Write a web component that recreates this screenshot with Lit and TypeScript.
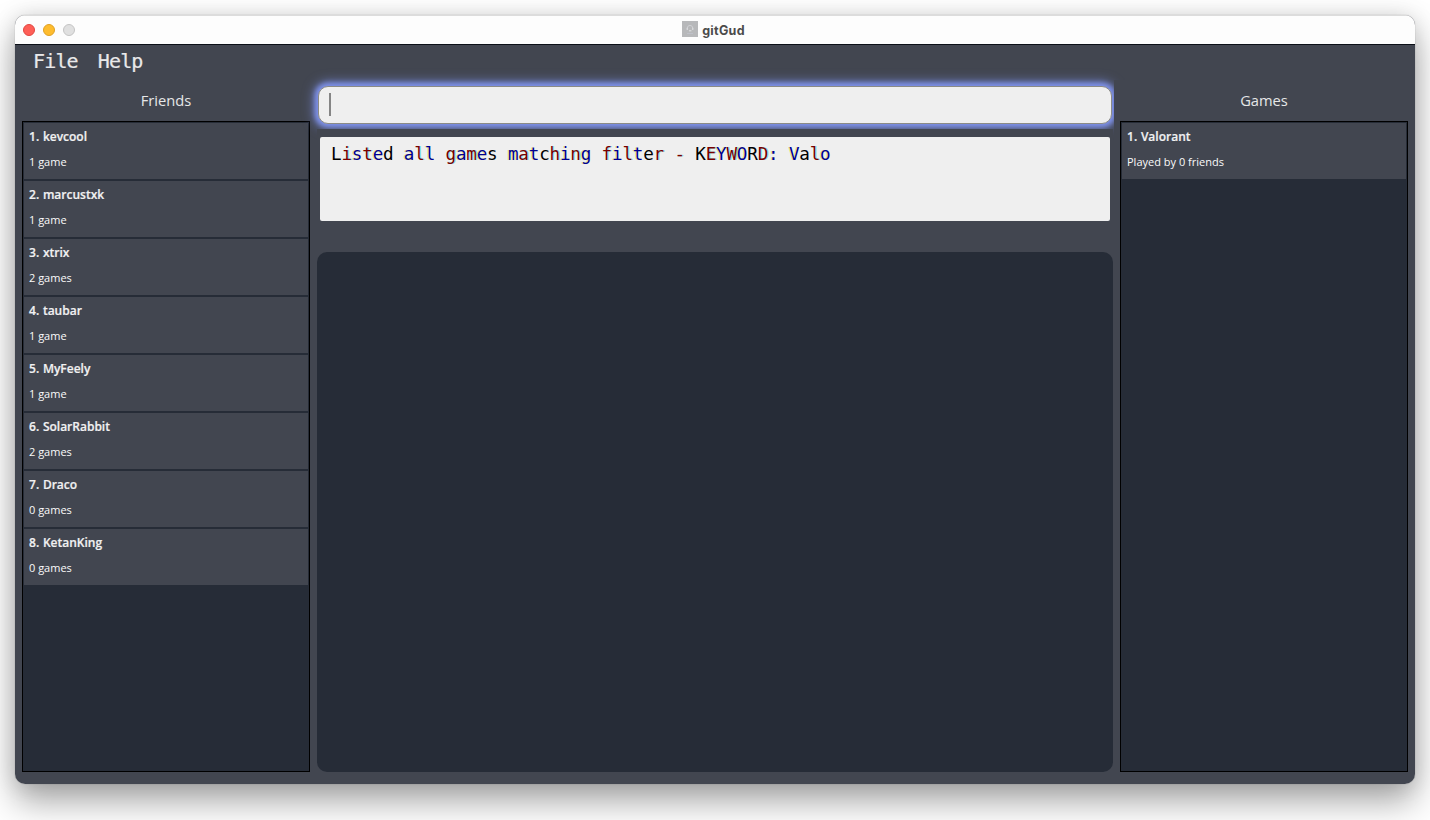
import { LitElement, html, css } from "lit";
import { customElement, property } from "lit/decorators.js";

interface Entry {
  name: string;
  detail: string;
}

const friends: Entry[] = [
  { name: "kevcool", detail: "1 game" },
  { name: "marcustxk", detail: "1 game" },
  { name: "xtrix", detail: "2 games" },
  { name: "taubar", detail: "1 game" },
  { name: "MyFeely", detail: "1 game" },
  { name: "SolarRabbit", detail: "2 games" },
  { name: "Draco", detail: "0 games" },
  { name: "KetanKing", detail: "0 games" },
];

const games: Entry[] = [{ name: "Valorant", detail: "Played by 0 friends" }];

const message = "Listed all games matching filter - KEYWORD: Valo";

// Subpixel colour fringe of each glyph; the advance of 10.4px repeats every five cells.
const fringes = ["plain", "warm", "cool", "warm", "cool"];

@customElement("entry-list")
class EntryList extends LitElement {
  @property() heading = "";
  @property({ attribute: false }) entries: Entry[] = [];

  static styles = css`
    :host {
      display: flex;
      flex-direction: column;
      width: 288px;
      flex: none;
      box-sizing: border-box;
      color: #f1f1f2;
      font-family: "Open Sans", sans-serif;
    }
    .heading {
      height: 41px;
      line-height: 40px;
      text-align: center;
      font-size: 14.7px;
      color: #e6e7e8;
    }
    .list {
      flex: 1;
      border: 1px solid #000;
      background: #262c37;
      padding: 1px;
      display: flex;
      flex-direction: column;
      gap: 2px;
    }
    .card {
      height: 56px;
      box-sizing: border-box;
      background: #424650;
      padding: 4px 5px 0;
    }
    .name {
      font-size: 12px;
      font-weight: 600;
      line-height: 20px;
      word-spacing: 0.6px;
      -webkit-text-stroke: 0.2px #f1f1f2;
      white-space: pre;
    }
    .detail {
      margin-top: 6px;
      font-size: 11px;
      line-height: 18px;
      color: #fafafa;
    }
  `;

  render() {
    return html`
      <div class="heading">${this.heading}</div>
      <div class="list">
        ${this.entries.map(
          (e, i) => html`<div class="card">
            <div class="name">${i + 1}. ${e.name}</div>
            <div class="detail">${e.detail}</div>
          </div>`
        )}
      </div>
    `;
  }
}

@customElement("app-root")
class AppRoot extends LitElement {
  static styles = css`
    :host {
      display: block;
      box-sizing: border-box;
      width: 1430px;
      height: 820px;
      padding: 15px 15px 36px;
      overflow: hidden;
      background: #fff;
    }
    .window {
      display: flex;
      flex-direction: column;
      height: 769px;
      border-radius: 10px;
      overflow: hidden;
      background: #424650;
    }
    .shade {
      border-radius: 10px;
      box-shadow: 0 0 1px rgba(0, 0, 0, 0.4), 0 0 22px rgba(0, 0, 0, 0.12),
        0 18px 34px rgba(0, 0, 0, 0.34);
    }
    .titlebar {
      position: relative;
      flex: none;
      height: 29px;
      box-sizing: border-box;
      background: #fdfdfd;
      border-top: 1px solid #dcdcdc;
      display: flex;
      align-items: center;
      justify-content: center;
      gap: 4px;
      padding-right: 3px;
      font: 700 12.5px Inter, sans-serif;
      letter-spacing: 0.3px;
      color: #4b4b4b;
    }
    .lights {
      position: absolute;
      left: 8px;
      top: 8px;
      display: flex;
      gap: 8px;
    }
    .light {
      width: 12px;
      height: 12px;
      box-sizing: border-box;
      border-radius: 50%;
    }
    .close { background: #fe5f57; border: 1px solid #e14640; }
    .minimize { background: #febc2e; border: 1px solid #dfa023; }
    .zoom { background: #e0e0e0; border: 1px solid #c4c4c4; }
    .icon {
      position: relative;
      top: -1px;
    }
    .menu {
      flex: none;
      height: 36px;
      box-sizing: border-box;
      border-top: 1px solid #0c1018;
      display: flex;
      gap: 20px;
      padding-left: 18px;
      font-family: "DejaVu Sans Mono", monospace;
      font-size: 20px;
      line-height: 33px;
      letter-spacing: -0.85px;
      -webkit-text-stroke: 0.2px #e9e9ea;
      color: #e9e9ea;
    }
    .body {
      flex: 1;
      display: flex;
      padding: 0 7px 12px;
    }
    .center {
      flex: 1;
      display: flex;
      flex-direction: column;
      padding: 6px 7px 0;
      min-width: 0;
    }
    .search {
      flex: none;
      height: 38px;
      box-sizing: border-box;
      margin: 0 1px;
      border: 1px solid #8b8b86;
      border-radius: 10px;
      background: #efefef;
      box-shadow: 0 0 5px 3px #7f92ea, 0 0 12px 4px rgba(127, 146, 234, 0.7);
      padding: 6px 10px;
    }
    .caret {
      width: 2px;
      height: 23px;
      background: #858585;
    }
    .lower {
      flex: 1;
      display: flex;
      flex-direction: column;
      margin-top: 5px;
      background: #424650;
      position: relative;
      padding-top: 8px;
    }
    .result {
      flex: none;
      height: 84px;
      box-sizing: border-box;
      margin: 0 3px;
      border-radius: 2px;
      background: #efefef;
      color: #000;
      padding: 5px 11px;
      font-family: "DejaVu Sans Mono", monospace;
      font-size: 17.6px;
      letter-spacing: -0.19px;
      line-height: 24px;
      white-space: pre;
    }
    .warm {
      color: #780000;
      text-shadow: 1px 0 rgba(0, 225, 235, 0.5);
    }
    .cool {
      color: #000090;
      text-shadow: -1px 0 rgba(235, 235, 0, 0.55);
    }
    .panel {
      flex: 1;
      margin-top: 31px;
      border-radius: 10px;
      background: #262c37;
    }
    .games {
      position: relative;
      background: #424650;
      box-shadow: -6px 0 #424650;
    }
  `;

  render() {
    return html`
      <div class="shade">
        <div class="window">
          <div class="titlebar">
            <div class="lights">
              <div class="light close"></div>
              <div class="light minimize"></div>
              <div class="light zoom"></div>
            </div>
            <svg class="icon" width="16" height="16" viewBox="0 0 16 16">
              <rect width="16" height="16" fill="#b7b8ba" />
              <path d="M5.2 7.4a2.8 3 0 0 1 5.6 0" fill="none" stroke="#cfd0d3" />
              <path d="M5.2 6.8v2.2M10.8 6.8v2.2M7 9.8h2.4" fill="none" stroke="#e2e3e6" />
              <path d="M5 12.5h6" stroke="#c3c4d0" stroke-width=".7" />
            </svg>
            <span>gitGud</span>
          </div>
          <div class="menu"><span>File</span><span>Help</span></div>
          <div class="body">
            <entry-list heading="Friends" .entries=${friends}></entry-list>
            <div class="center">
              <div class="search"><div class="caret"></div></div>
              <div class="lower">
                <div class="result">${[...message].map((c, i) => html`<span class=${fringes[i % 5]}>${c}</span>`)}</div>
                <div class="panel"></div>
              </div>
            </div>
            <entry-list class="games" heading="Games" .entries=${games}></entry-list>
          </div>
        </div>
      </div>
    `;
  }
}
